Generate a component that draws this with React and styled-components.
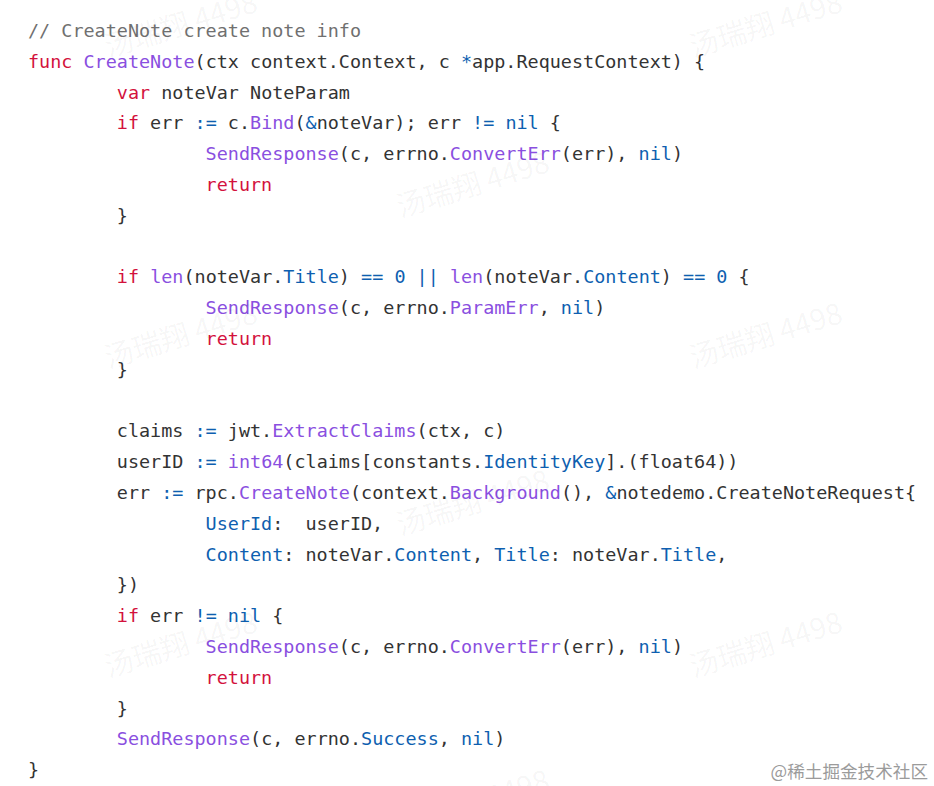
import React from 'react';
import styled, { createGlobalStyle } from 'styled-components';

const GlobalStyle = createGlobalStyle`
  html, body {
    margin: 0;
    padding: 0;
    background: #fff;
  }
`;

const Page = styled.div`
  position: relative;
  width: 934px;
  height: 786px;
  overflow: hidden;
  background: #fff;
`;

const CodeBlock = styled.pre`
  margin: 0;
  padding: 16px 0 0 28px;
  font-family: "DejaVu Sans Mono", "Liberation Mono", monospace;
  font-size: 18.45px;
  line-height: 30.8px;
  color: #333;
  tab-size: 8;
  -moz-tab-size: 8;
`;

const Line = styled.div`
  height: 30.8px;
  white-space: pre;
`;

const colors = {
  k: '#d3123d',
  f: '#8a4fdf',
  b: '#0e5fb0',
  c: '#707070',
};

const Token = styled.span`
  color: ${p => colors[p.$kind] || '#333'};
`;

const Watermark = styled.div`
  position: absolute;
  width: 180px;
  text-align: center;
  font-family: "Noto Sans CJK SC", "Noto Sans", sans-serif;
  font-size: 29px;
  color: rgba(0, 0, 0, 0.045);
  transform: translate(-50%, -50%) rotate(-17deg);
  pointer-events: none;
  white-space: nowrap;
`;

const Credit = styled.div`
  position: absolute;
  right: 6px;
  bottom: 3px;
  font-family: "Noto Sans CJK SC", "Noto Sans", sans-serif;
  font-size: 17.6px;
  color: #9b9b9b;
`;

// token shorthand: strings are plain text, [kind, text] for coloured spans
const code = [
  [['c', '// CreateNote create note info']],
  [['k', 'func'], ' ', ['f', 'CreateNote'], '(ctx context.Context, c ', ['b', '*'], 'app.RequestContext) {'],
  ['\t', ['k', 'var'], ' noteVar NoteParam'],
  ['\t', ['k', 'if'], ' err ', ['b', ':='], ' c.', ['f', 'Bind'], '(', ['b', '&'], 'noteVar); err ', ['b', '!='], ' ', ['b', 'nil'], ' {'],
  ['\t\t', ['f', 'SendResponse'], '(c, errno.', ['f', 'ConvertErr'], '(err), ', ['b', 'nil'], ')'],
  ['\t\t', ['k', 'return']],
  ['\t}'],
  [''],
  ['\t', ['k', 'if'], ' ', ['f', 'len'], '(noteVar.', ['b', 'Title'], ') ', ['b', '=='], ' ', ['b', '0'], ' ', ['b', '||'], ' ', ['f', 'len'], '(noteVar.', ['b', 'Content'], ') ', ['b', '=='], ' ', ['b', '0'], ' {'],
  ['\t\t', ['f', 'SendResponse'], '(c, errno.', ['f', 'ParamErr'], ', ', ['b', 'nil'], ')'],
  ['\t\t', ['k', 'return']],
  ['\t}'],
  [''],
  ['\tclaims ', ['b', ':='], ' jwt.', ['f', 'ExtractClaims'], '(ctx, c)'],
  ['\tuserID ', ['b', ':='], ' ', ['f', 'int64'], '(claims[constants.', ['b', 'IdentityKey'], '].(float64))'],
  ['\terr ', ['b', ':='], ' rpc.', ['f', 'CreateNote'], '(context.', ['f', 'Background'], '(), ', ['b', '&'], 'notedemo.CreateNoteRequest{'],
  ['\t\t', ['b', 'UserId'], ':  userID,'],
  ['\t\t', ['b', 'Content'], ': noteVar.', ['b', 'Content'], ', ', ['b', 'Title'], ': noteVar.', ['b', 'Title'], ','],
  ['\t})'],
  ['\t', ['k', 'if'], ' err ', ['b', '!='], ' ', ['b', 'nil'], ' {'],
  ['\t\t', ['f', 'SendResponse'], '(c, errno.', ['f', 'ConvertErr'], '(err), ', ['b', 'nil'], ')'],
  ['\t\t', ['k', 'return']],
  ['\t}'],
  ['\t', ['f', 'SendResponse'], '(c, errno.', ['b', 'Success'], ', ', ['b', 'nil'], ')'],
  ['}'],
];

// watermark centres, tiled across the canvas like the source image
const marks = [
  [180, 22], [765, 22],
  [472, 182],
  [180, 333], [765, 333],
  [472, 500],
  [180, 642], [765, 642],
  [472, 800],
];

export default function App() {
  return (
    <Page>
      <GlobalStyle />
      <CodeBlock>
        {code.map((line, i) => (
          <Line key={i}>
            {line.map((t, j) =>
              typeof t === 'string'
                ? t
                : <Token key={j} $kind={t[0]}>{t[1]}</Token>
            )}
          </Line>
        ))}
      </CodeBlock>
      {marks.map(([x, y], i) => (
        <Watermark key={i} style={{ left: x, top: y }}>汤瑞翔 4498</Watermark>
      ))}
      <Credit>@稀土掘金技术社区</Credit>
    </Page>
  );
}
